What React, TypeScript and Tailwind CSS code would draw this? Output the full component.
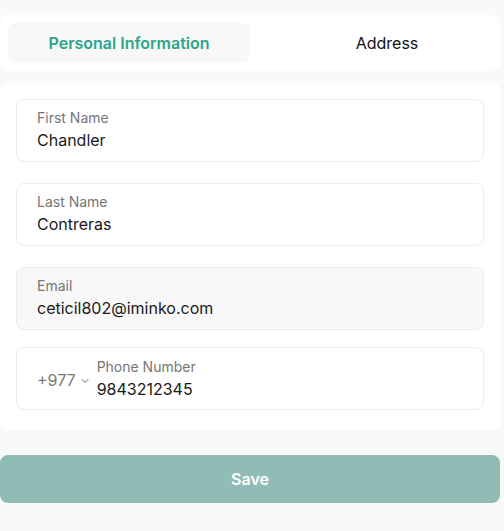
import React from "react";
import { ChevronDown } from "lucide-react";

function Field({ label, value, muted }: { label: string; value: string; muted?: boolean }) {
  return (
    <div
      className={`flex flex-col rounded-lg border border-[#ececec] px-5 pt-2 pb-2 h-[63px] ${
        muted ? "bg-[#f8f8f8]" : "bg-white"
      }`}
    >
      <span className="text-[14px] leading-5 text-[#767676]">{label}</span>
      <span className="text-[16px] leading-6 text-[#1a1a1a]">{value}</span>
    </div>
  );
}

export default function App() {
  return (
    <div
      className="min-h-[531px] w-[504px] bg-[#f9f9f9] pr-1 pt-[15px]"
      style={{ fontFamily: "Inter, 'Noto Sans', sans-serif" }}
    >
      <div className="grid h-[56px] grid-cols-2 rounded-lg bg-white p-2">
        <button className="flex items-center justify-center rounded-lg bg-[#f8f8f8] text-[16px] font-semibold text-[#2ca58d]">
          Personal Information
        </button>
        <button className="flex items-center justify-center text-[16px] text-[#111]">
          <span className="pl-8">Address</span>
        </button>
      </div>

      <div className="mt-3 flex flex-col gap-[21px] rounded-lg bg-white px-4 pt-4 pb-5">
        <Field label="First Name" value="Chandler" />
        <Field label="Last Name" value="Contreras" />
        <Field label="Email" value="ceticil802@iminko.com" muted />
        <div className="-mt-1 flex h-[63px] items-center rounded-lg border border-[#ececec] bg-white px-5">
          <div className="mt-[3px] flex items-center gap-[3px] text-[16px] text-[#7a7a7a]">
            <span>+977</span>
            <ChevronDown size={12} strokeWidth={2} className="mt-[1px] text-[#666]" />
          </div>
          <div className="ml-[6px] flex flex-col">
            <span className="text-[14px] leading-5 text-[#767676]">Phone Number</span>
            <span className="text-[16px] leading-6 text-[#1a1a1a]">9843212345</span>
          </div>
        </div>
      </div>

      <button className="mt-[25px] flex h-[48px] w-full items-center justify-center rounded-lg bg-[#8fbdb5] text-[16px] font-semibold text-white">
        Save
      </button>
    </div>
  );
}
